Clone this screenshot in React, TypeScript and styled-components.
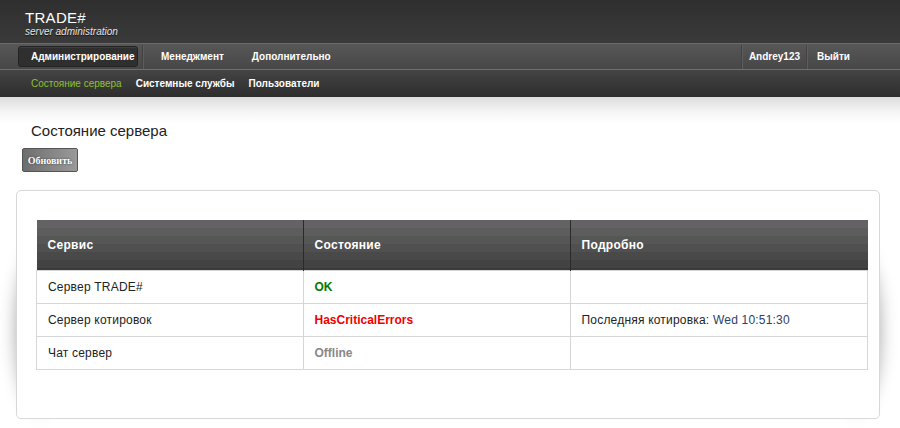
import React from "react";
import styled, { createGlobalStyle, css } from "styled-components";

const Global = createGlobalStyle`
    html, body {
        margin: 0;
        padding: 0;
        background: #fff;
    }
    body {
        font-family: "Liberation Sans", Arial, sans-serif;
    }
`

const TopBar = styled.div`
    height: 43px;
    background: #353535;
    background-image: linear-gradient(180deg, #2f2f2f, #3a3a3a);
    padding: 10px 0 0 25px;
    box-sizing: border-box;
    color: #fff;
`

const LogoTitle = styled.div`
    font-family: "Liberation Sans", Arial, sans-serif;
    font-size: 15px;
    line-height: 15px;
    letter-spacing: 0.3px;
`

const LogoSub = styled.div`
    font-family: "Liberation Sans", Arial, sans-serif;
    font-style: italic;
    font-size: 10px;
    line-height: 11px;
    color: #e6e6e6;
    margin-top: 1px;
    text-shadow: 0 1px 1px #111;
`

const NavBar = styled.div`
    display: flex;
    align-items: center;
    height: 26px;
    border-top: 1px solid #6a6a6a;
    background: linear-gradient(180deg, #575757, #474747);
    padding: 0 40px 0 18px;
    box-sizing: border-box;
`

const NavItem = styled.div<{ $active?: boolean; $pl?: number; $pr?: number }>`
    font-family: "Liberation Sans", Arial, sans-serif;
    font-weight: bold;
    font-size: 10px;
    color: #fff;
    padding: 0 ${props => props.$pr ?? 10}px 0 ${props => props.$pl ?? 10}px;
    height: 19px;
    line-height: 19px;
    ${props => props.$active && css`
        padding: 0 12px;
        width: 94px;
        background: #2f2f2f;
        border: 1px solid #232323;
        border-radius: 3px;
        box-shadow: inset 0 1px 0 #3e3e3e;
    `}
`

const Sep = styled.div`
    width: 1px;
    height: 24px;
    background: #424242;
    border-right: 1px solid #5e5e5e;
    margin: 0 4px;
`

const Spacer = styled.div`
    flex: 1;
`

const SubNav = styled.div`
    display: flex;
    align-items: center;
    height: 28px;
    border-top: 1px solid #6f6f6f;
    background: linear-gradient(180deg, #444, #2d2d2d);
    padding-left: 31px;
    column-gap: 14px;
    box-sizing: border-box;
`

const SubItem = styled.div<{ $active?: boolean }>`
    font-family: "Liberation Sans", Arial, sans-serif;
    font-weight: ${props => props.$active ? "normal" : "bold"};
    font-size: 10px;
    color: ${props => props.$active ? "#8fc030" : "#fff"};
`

const Main = styled.div`
    position: relative;
    z-index: 0;
    background: linear-gradient(180deg, #dcdcdc 0px, #f4f4f4 14px, #fff 26px);
    padding: 25px 20px 9px 16px;
`

const Title = styled.h2`
    margin: 0 0 9px 15px;
    font-family: "Liberation Sans", Arial, sans-serif;
    font-weight: normal;
    font-size: 15px;
    color: #222;
`

const Refresh = styled.button`
    display: block;
    margin-left: 6px;
    width: 56px;
    height: 24px;
    padding: 0;
    border: 1px solid #555;
    border-radius: 2px;
    background: linear-gradient(90deg, #6e6e6e, #9a9a9a);
    color: #fff;
    font-family: "Liberation Serif", "Times New Roman", serif;
    font-weight: bold;
    font-size: 10px;
    text-shadow: 0 0 2px #333;
    cursor: pointer;
`

/* the curled "lifted" shadow on both sides of the panel */
const Panel = styled.div`
    position: relative;
    margin-top: 18px;
    border: 1px solid #d8d8d8;
    border-radius: 5px;
    background: #fff;
    padding: 29px 11px 48px 19px;
    &::before, &::after {
        content: "";
        position: absolute;
        z-index: -1;
        top: 70px;
        bottom: 18px;
        width: 30px;
        border-radius: 50%;
        box-shadow: 0 0 18px 8px rgba(0, 0, 0, 0.38);
    }
    &::before { left: 8px; }
    &::after { right: 8px; }
`

const Table = styled.table`
    width: 100%;
    border-collapse: collapse;
    font-family: "Liberation Sans", Arial, sans-serif;
    font-size: 12px;
`

const Th = styled.th<{ $w?: number }>`
    ${props => props.$w && css`width: ${props.$w}px;`}
    height: 50px;
    padding: 0 11px;
    text-align: left;
    color: #fff;
    font-weight: bold;
    letter-spacing: 0.3px;
    background: linear-gradient(180deg,
        #646264 0 8px, #5d5d5d 8px 16px, #565656 16px 24px,
        #505050 24px 32px, #494949 32px 40px, #434343 40px 48px, #3a3a3a 48px 50px);
    border-left: 1px solid #2a2a2a;
    &:first-child { border-left: none; }
`

const Td = styled.td<{ $tone?: "ok" | "err" | "off" }>`
    height: 32px;
    padding: 0 11px;
    border: 1px solid #d6d6d6;
    color: #222;
    letter-spacing: 0.2px;
    ${props => props.$tone && css`font-weight: bold; letter-spacing: 0;`}
    ${props => props.$tone === "ok" && css`color: #007a00;`}
    ${props => props.$tone === "err" && css`color: #f00000;`}
    ${props => props.$tone === "off" && css`color: #888;`}
`

const Time = styled.span`
    color: #2a3f6a;
`

const rows: { name: string; state: string; tone: "ok" | "err" | "off"; info?: React.ReactNode }[] = [
    { name: "Сервер TRADE#", state: "OK", tone: "ok" },
    { name: "Сервер котировок", state: "HasCriticalErrors", tone: "err", info: <>Последняя котировка: <Time>Wed 10:51:30</Time></> },
    { name: "Чат сервер", state: "Offline", tone: "off" },
]

const App = () => {
    return (
        <>
            <Global />
            <TopBar>
                <LogoTitle>TRADE#</LogoTitle>
                <LogoSub>server administration</LogoSub>
            </TopBar>
            <NavBar>
                <NavItem $active>Администрирование</NavItem>
                <Sep />
                <NavItem $pl={13}>Менеджмент</NavItem>
                <NavItem $pl={18}>Дополнительно</NavItem>
                <Spacer />
                <Sep />
                <NavItem $pl={2} $pr={2}>Andrey123</NavItem>
                <Sep />
                <NavItem $pl={5}>Выйти</NavItem>
            </NavBar>
            <SubNav>
                <SubItem $active>Состояние сервера</SubItem>
                <SubItem>Системные службы</SubItem>
                <SubItem>Пользователи</SubItem>
            </SubNav>
            <Main>
                <Title>Состояние сервера</Title>
                <Refresh>Обновить</Refresh>
                <Panel>
                    <Table>
                        <thead>
                            <tr>
                                <Th $w={244}>Сервис</Th>
                                <Th $w={244}>Состояние</Th>
                                <Th>Подробно</Th>
                            </tr>
                        </thead>
                        <tbody>
                            {rows.map(r => (
                                <tr key={r.name}>
                                    <Td>{r.name}</Td>
                                    <Td $tone={r.tone}>{r.state}</Td>
                                    <Td>{r.info}</Td>
                                </tr>
                            ))}
                        </tbody>
                    </Table>
                </Panel>
            </Main>
        </>
    )
}

export default App;
